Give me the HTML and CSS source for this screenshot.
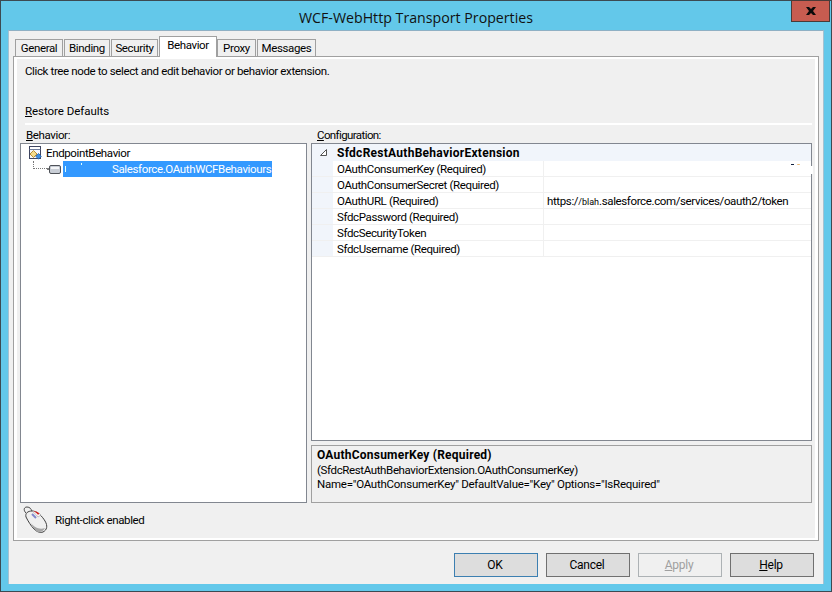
FILE: index.html
```html
<!DOCTYPE html>
<html lang="en">
<head>
<meta charset="utf-8">
<title>WCF-WebHttp Transport Properties</title>
<link rel="stylesheet" href="styles.css">
</head>
<body>
<div class="window">
  <header class="titlebar">
    <h1 class="title">WCF-WebHttp Transport Properties</h1>
    <button class="close" aria-label="Close">
      <svg width="14" height="10" viewBox="0 0 14 10"><path d="M2 1h3l2 2 2-2h3L9 5l3 4H9L7 7 5 9H2l3-4z" fill="#0a0a0a"/></svg>
    </button>
  </header>
  <div class="face">
    <nav class="tabs">
      <span class="tab tab-general">General</span>
      <span class="tab tab-binding">Binding</span>
      <span class="tab tab-security">Security</span>
      <span class="tab tab-active">Behavior</span>
      <span class="tab tab-proxy">Proxy</span>
      <span class="tab tab-messages">Messages</span>
    </nav>
    <section class="panel">
      <div class="panel-inner">
        <p class="hint">Click tree node to select and edit behavior or behavior extension.</p>
        <p class="restore"><u>R</u>estore Defaults</p>
        <div class="divider"></div>
        <div class="columns">
          <div class="col-left">
            <label class="col-label"><u>B</u>ehavior:</label>
            <div class="tree">
              <div class="tree-root">
                <svg class="root-icon" width="14" height="14" viewBox="0 0 14 14">
                  <rect x="1.500" y="0.500" width="11" height="12" fill="#f7f8fb" stroke="#3e4560"/>
                  <rect x="2" y="1" width="10" height="2" fill="#fff"/>
                  <path d="M1.500 3.500h11" stroke="#6f7d9c"/>
                  <path d="M5.500 4.500l3.500 3.500-3.500 3.500-3.500-3.500z" fill="#f5dc8c" stroke="#b98f36"/>
                  <path d="M10.500 7.500l2.800 2.800-2.800 2.800-2.800-2.800z" fill="#3f8fe0" stroke="#1f5fa8" stroke-width=".8"/>
                </svg>
                <span>EndpointBehavior</span>
              </div>
              <div class="tree-child">
                <span class="tree-line"></span>
                <svg class="node-icon" width="14" height="10" viewBox="0 0 14 10">
                  <rect x="0" y="4" width="3" height="2" fill="#7d7d7d"/>
                  <rect x="2.500" y="1.500" width="11" height="8" rx="1.500" fill="#c9ced6" stroke="#4f5258"/>
                  <rect x="4" y="3" width="8" height="2" fill="#f4f5f7"/>
                </svg>
                <span class="selected"><i class="speck"></i><i class="speck speck2"></i>Salesforce.OAuthWCFBehaviours</span>
              </div>
            </div>
          </div>
          <div class="col-right">
            <label class="col-label config-label"><u>C</u>onfiguration:</label>
            <div class="grid">
              <div class="grid-head">
                <svg class="expander" width="7" height="7" viewBox="0 0 7 7"><path d="M6.500 .5v6h-6z" fill="#fff" stroke="#555"/></svg>
                <span>SfdcRestAuthBehaviorExtension</span>
              </div>
              <div class="row"><span class="key">OAuthConsumerKey (Required)</span><span class="val val-blank"><i class="mark"></i></span></div>
              <div class="row"><span class="key">OAuthConsumerSecret (Required)</span><span class="val"></span></div>
              <div class="row"><span class="key">OAuthURL (Required)</span><span class="val">https:/<small class="tiny">/blah</small>.salesforce.com/services/oauth2/token</span></div>
              <div class="row"><span class="key">SfdcPassword (Required)</span><span class="val"></span></div>
              <div class="row"><span class="key">SfdcSecurityToken</span><span class="val"></span></div>
              <div class="row"><span class="key">SfdcUsername (Required)</span><span class="val"></span></div>
            </div>
            <div class="desc">
              <strong>OAuthConsumerKey (Required)</strong>
              <span>(SfdcRestAuthBehaviorExtension.OAuthConsumerKey)</span>
              <span class="desc-name">Name="OAuthConsumerKey" DefaultValue="Key" Options="IsRequired"</span>
            </div>
          </div>
        </div>
        <div class="rightclick">
          <svg width="26" height="27" viewBox="0 0 26 27">
            <path d="M3 7C0 4 1 1 4 1s4 2 5 4" fill="none" stroke="#4a4a4a"/>
            <path d="M3 11c-1-4 2-6 6-6 5 0 10 5 13 10 3 5 2 9-2 11-3 1-6 0-9-3-3-3-6-8-8-12z" fill="#efefef" stroke="#3f3f3f"/>
            <path d="M13 25c-2-2-4-5-5-8 3 4 8 7 14 5-2 4-6 5-9 3z" fill="#a6a6a6"/>
            <path d="M9 5c3 0 6 1 9 4l-3 2C13 8 11 7 9 5z" fill="#fafafa" stroke="#909090" stroke-width=".5"/>
            <path d="M10 5c3 .3 4.500 1 6.500 2.700l-1.500 1C13.500 7 12 6 10 5z" fill="#d01c1c"/>
            <path d="M9 8l4 4" stroke="#8088cc" stroke-width="2"/>
          </svg>
          <span>Right-click enabled</span>
        </div>
      </div>
    </section>
    <footer class="buttons">
      <button class="btn btn-default">OK</button>
      <button class="btn">Cancel</button>
      <button class="btn btn-disabled"><u>A</u>pply</button>
      <button class="btn"><u>H</u>elp</button>
    </footer>
  </div>
</div>
</body>
</html>
```
FILE: styles.css
```css
* { box-sizing: border-box; }
html, body { margin: 0; padding: 0; }
body {
  width: 832px;
  height: 592px;
  overflow: hidden;
  font-family: Roboto, "Liberation Sans", sans-serif;
  font-size: 11.5px;
  letter-spacing: -0.37px;
  color: #000;
}
.window {
  width: 832px;
  height: 592px;
  background: #63c8ea;
  border: 1px solid #3c4a52;
  padding: 0 7px 7px;
  display: flex;
  flex-direction: column;
}
.titlebar {
  position: relative;
  height: 29px;
  flex: none;
  display: flex;
  align-items: center;
  justify-content: center;
}
.title {
  margin: 3px 0 0;
  font-family: "Open Sans", sans-serif;
  font-weight: 400;
  font-size: 14.2px;
  letter-spacing: 0;
  color: #111;
}
.close {
  position: absolute;
  top: -1px;
  right: -6px;
  width: 39px;
  height: 22px;
  padding: 0;
  border: 1px solid #4a3a38;
  background: #c75c50;
  display: flex;
  align-items: center;
  justify-content: center;
}
.face {
  flex: 1;
  background: #f0f0f0;
  border-top: 1px solid #8fb0c4;
  border-left: 1px solid #a5c2d2;
  border-right: 1px solid #a5c2d2;
  padding: 5px 4px 0;
  display: flex;
  flex-direction: column;
}
.tabs {
  height: 20px;
  flex: none;
  display: flex;
  align-items: flex-end;
  position: relative;
  z-index: 1;
  padding-left: 2px;
  gap: 1px;
}
.tab {
  height: 17px;
  border: 1px solid #a0a0a0;
  border-bottom: 0;
  background: #f0f0f0;
  text-align: center;
  line-height: 16px;
}
.tab-general { width: 48px; }
.tab-binding { width: 46px; }
.tab-security { width: 47px; }
.tab-proxy { width: 39px; margin-left: -1px; }
.tab-messages { width: 59px; }
.tab-active {
  width: 58px;
  height: 21px;
  margin-bottom: -1px;
  background: #fff;
  line-height: 17px;
}
.panel {
  height: 485px;
  flex: none;
  background: #fff;
  border: 1px solid #a0a0a0;
  padding: 2px 3px 2px;
}
.panel-inner {
  height: 100%;
  background: #f0f0f0;
  padding: 0 3px;
  display: flex;
  flex-direction: column;
}
.hint { margin: 5px 0 0 5px; line-height: 15px; height: 15px; }
.restore { margin: 25px 0 0 5px; line-height: 15px; height: 15px; letter-spacing: -0.05px; }
.divider { height: 2px; background: #fff; margin: 4px 0 0 5px; }
.columns {
  display: grid;
  grid-template-columns: 287px 501px;
  gap: 4px;
  height: 378px;
}
.col-left, .col-right { display: flex; flex-direction: column; min-width: 0; }
.col-label { height: 18px; padding: 3px 0 0 6px; line-height: 15px; }
.config-label { letter-spacing: -0.6px; }
.tree {
  flex: 1;
  background: #fff;
  border: 1px solid #828790;
  padding: 1px 0 0 7px;
}
.tree-root { display: flex; align-items: center; height: 16px; gap: 4px; }
.root-icon { flex: none; }
.tree-child { display: flex; align-items: center; height: 16px; position: relative; margin-left: 5px; }
.tree-line {
  width: 14px;
  height: 8px;
  margin-top: -8px;
  border-left: 1px dotted #777;
  border-bottom: 1px dotted #777;
  flex: none;
}
.node-icon { flex: none; margin-right: 2px; }
.selected {
  position: relative;
  width: 209px;
  height: 16px;
  line-height: 16px;
  background: #3399ff;
  color: #fff;
  padding-left: 49px;
  white-space: nowrap;
}
.speck { position: absolute; left: 2px; top: 5px; width: 1px; height: 6px; background: #dff; }
.speck2 { left: 18px; top: 2px; height: 2px; }
.grid {
  height: 298px;
  flex: none;
  background: #fff;
  border: 1px solid #828790;
}
.grid-head {
  height: 17px;
  background: #f1f5fb;
  display: flex;
  align-items: center;
  font-size: 12px;
  font-weight: 700;
  letter-spacing: 0.27px;
  padding-left: 8px;
}
.expander { margin-right: 10px; flex: none; }
.row {
  height: 16px;
  display: grid;
  grid-template-columns: 231px 1fr;
  line-height: 15px;
  background: linear-gradient(to right, #f1f5fb 21px, #fff 21px);
  border-bottom: 1px solid #f0f0f0;
}
.key { padding: 1px 0 0 25px; white-space: nowrap; }
.val { padding: 1px 0 0 3px; border-left: 1px solid #f0f0f0; white-space: nowrap; }
.val-blank { position: relative; }
.val-blank::after {
  content: "";
  position: absolute;
  left: 0;
  right: -2px;
  top: 5px;
  height: 8px;
  background: #fff;
}
.mark {
  position: absolute;
  left: 247px;
  top: 3px;
  width: 3px;
  height: 1px;
  background: #102040;
  box-shadow: 6px 0 0 -0.2px #d88a20;
}
.tiny { font-size: 9px; letter-spacing: 0; }
.desc {
  margin-top: 4px;
  height: 58px;
  flex: none;
  border: 1px solid #a0a0a0;
  padding: 2px 5px;
  display: flex;
  flex-direction: column;
  line-height: 14px;
}
.desc strong { line-height: 15px; font-size: 12px; letter-spacing: 0.22px; }
.desc-name { letter-spacing: -0.25px; }
.rightclick {
  display: flex;
  align-items: center;
  gap: 6px;
  padding: 3px 0 0 3px;
}
.buttons {
  flex: 1;
  display: flex;
  justify-content: flex-end;
  gap: 8px;
  padding: 12px 5px 0 0;
}
.btn {
  width: 84px;
  height: 24px;
  border: 1px solid #707070;
  background: #dddddd;
  font: inherit;
  font-size: 12px;
  letter-spacing: -0.25px;
  color: #000;
  padding: 0 2px 0 0;
}
.btn-default { border-color: #3c7fb1; }
.btn-disabled { background: #f0f0f0; border-color: #adb2b5; color: #9f9f9f; }
```
